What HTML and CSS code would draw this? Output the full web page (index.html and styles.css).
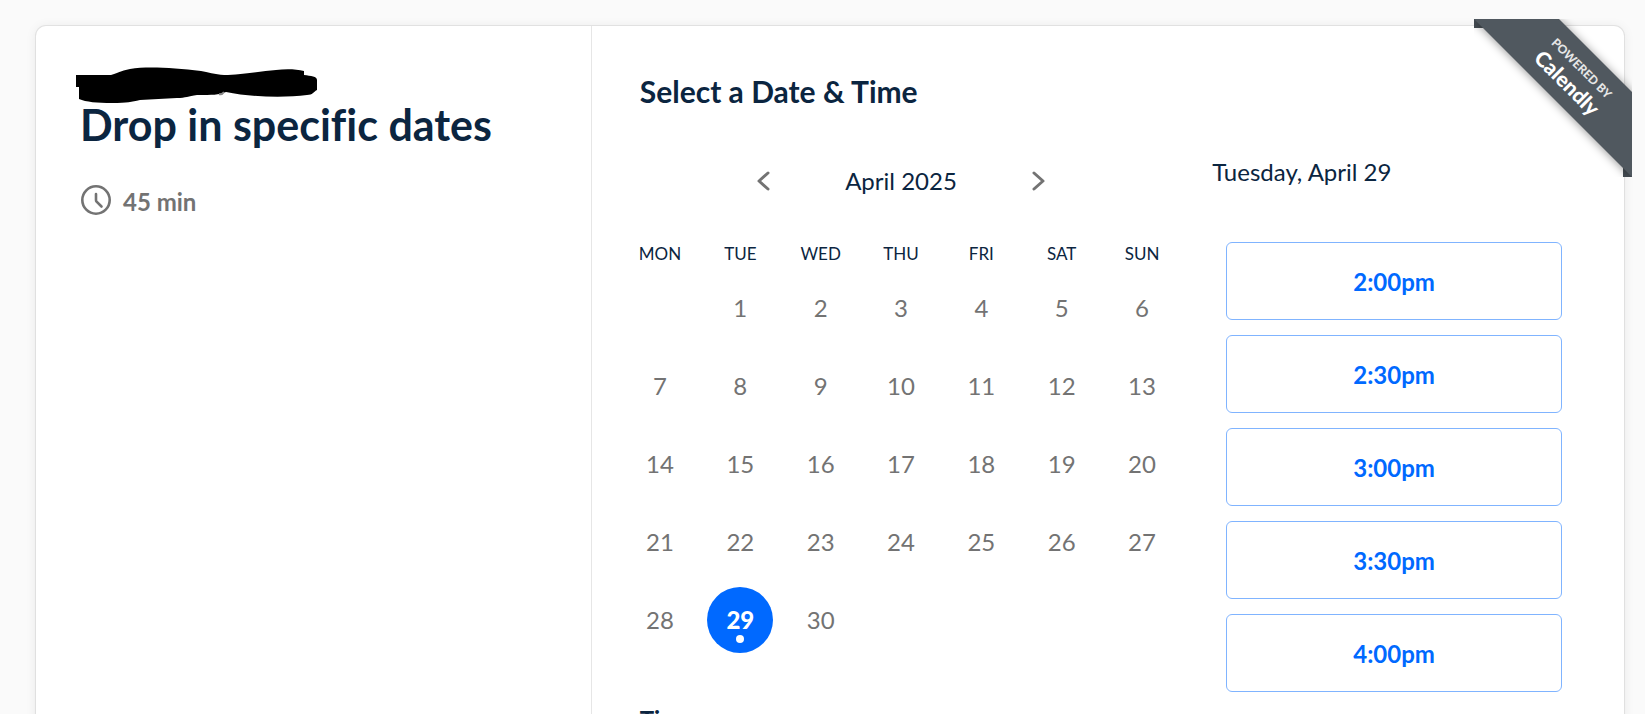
FILE: index.html
```
<!DOCTYPE html>
<html lang="en">
<head>
    <meta charset="UTF-8">
    <meta name="viewport" content="width=device-width, initial-scale=1.0">
    <title>Drop in specific dates - Calendly</title>
    <link rel="stylesheet" href="styles.css">
</head>
<body>
    <main class="booking">
        <section class="event-info">
            <svg class="host-name" width="241" height="36" viewBox="0 0 241 36" aria-hidden="true">
                <path d="M0 8H35C44 5 48 3 54 2C72 -1 98 1 125 4C136 6 141 8 152 8C172 7 187 4 200 3C209 2 220 2 228 4V8C235 9 241 9 241 13V23C237 25 237 28 231 28C208 31 174 30 150 25C142 28 137 28 121 28C112 29 110 31 101 31L64 33C55 35 52 36 36 36C21 36 10 35 3 32V20H0Z"/>
                <path class="host-rest" d="M143 27q3 1 5 -2"/>
            </svg>
            <h1 class="event-title">Drop in specific dates</h1>
            <div class="duration">
                <svg class="clock" width="30" height="30" viewBox="0 0 30 30" aria-hidden="true">
                    <circle cx="15" cy="15" r="13.7"/>
                    <path d="M15 9v6q0 1 .6 1.700L20.500 21.500"/>
                </svg>
                <span class="duration-text">45 min</span>
            </div>
        </section>

        <section class="picker">
            <div class="calendar">
                <h2 class="picker-title">Select a Date &amp; Time</h2>
                <div class="month-nav">
                    <button class="nav-button" type="button" aria-label="Previous month">
                        <svg width="14" height="20" viewBox="0 0 14 20"><path d="M12 2L3 10L12 18"/></svg>
                    </button>
                    <div class="month">April 2025</div>
                    <button class="nav-button" type="button" aria-label="Next month">
                        <svg width="14" height="20" viewBox="0 0 14 20"><path d="M2 2L11 10L2 18"/></svg>
                    </button>
                </div>
                <table class="days">
                    <thead>
                        <tr><th>MON</th><th>TUE</th><th>WED</th><th>THU</th><th>FRI</th><th>SAT</th><th>SUN</th></tr>
                    </thead>
                    <tbody>
                        <tr>
                            <td></td>
                            <td><button class="day" disabled>1</button></td>
                            <td><button class="day" disabled>2</button></td>
                            <td><button class="day" disabled>3</button></td>
                            <td><button class="day" disabled>4</button></td>
                            <td><button class="day" disabled>5</button></td>
                            <td><button class="day" disabled>6</button></td>
                        </tr>
                        <tr>
                            <td><button class="day" disabled>7</button></td>
                            <td><button class="day" disabled>8</button></td>
                            <td><button class="day" disabled>9</button></td>
                            <td><button class="day" disabled>10</button></td>
                            <td><button class="day" disabled>11</button></td>
                            <td><button class="day" disabled>12</button></td>
                            <td><button class="day" disabled>13</button></td>
                        </tr>
                        <tr>
                            <td><button class="day" disabled>14</button></td>
                            <td><button class="day" disabled>15</button></td>
                            <td><button class="day" disabled>16</button></td>
                            <td><button class="day" disabled>17</button></td>
                            <td><button class="day" disabled>18</button></td>
                            <td><button class="day" disabled>19</button></td>
                            <td><button class="day" disabled>20</button></td>
                        </tr>
                        <tr>
                            <td><button class="day" disabled>21</button></td>
                            <td><button class="day" disabled>22</button></td>
                            <td><button class="day" disabled>23</button></td>
                            <td><button class="day" disabled>24</button></td>
                            <td><button class="day" disabled>25</button></td>
                            <td><button class="day" disabled>26</button></td>
                            <td><button class="day" disabled>27</button></td>
                        </tr>
                        <tr>
                            <td><button class="day" disabled>28</button></td>
                            <td><button class="day selected" type="button" aria-pressed="true">29</button></td>
                            <td><button class="day" disabled>30</button></td>
                            <td></td>
                            <td></td>
                            <td></td>
                            <td></td>
                        </tr>
                    </tbody>
                </table>
                <h3 class="timezone-title">Time zone</h3>
            </div>

            <div class="times">
                <div class="times-date">Tuesday, April 29</div>
                <div class="time-list">
                    <button class="time" type="button">2:00pm</button>
                    <button class="time" type="button">2:30pm</button>
                    <button class="time" type="button">3:00pm</button>
                    <button class="time" type="button">3:30pm</button>
                    <button class="time" type="button">4:00pm</button>
                </div>
            </div>
        </section>

        <a class="ribbon" href="#">
            <svg class="ribbon-shape" width="158" height="158" viewBox="0 0 158 158" aria-hidden="true">
                <path class="ribbon-fold" d="M0 0H9V9H0ZM149 149H158V158H149Z"/>
                <path class="ribbon-band" d="M0 0H85L158 73V158Z"/>
            </svg>
            <span class="ribbon-text">
                <span class="ribbon-small">POWERED BY</span>
                <span class="ribbon-brand">Calendly</span>
            </span>
        </a>
    </main>
</body>
</html>
```

FILE: styles.css
```
* {
    margin: 0;
    padding: 0;
    box-sizing: border-box;
}

body {
    height: 100vh;
    padding: 26px 21px 0 36px;
    overflow: hidden;
    font-family: Lato, 'Liberation Sans', sans-serif;
    font-size: 24px;
    line-height: 32px;
    font-variant-ligatures: none;
    background: #fafafa;
    color: #0b2540;
}

button {
    font: inherit;
    background: none;
    border: none;
    cursor: pointer;
}

.booking {
    position: relative;
    display: flex;
    min-height: 100vh;
    background: white;
    border-radius: 10px;
    box-shadow: 0 0 0 1px rgba(26, 26, 26, 0.08), 0 1px 12px rgba(0, 0, 0, 0.08);
}

.event-info {
    flex: 0 0 35%;
    padding: 41px 40px 0;
    border-right: 1px solid #e6e6e6;
}

.host-name {
    display: block;
}

.host-rest {
    fill: none;
    stroke: #888;
    stroke-width: 2;
}

.event-title {
    padding-left: 4px;
    font-size: 43px;
    line-height: 44px;
}

.duration {
    display: flex;
    align-items: center;
    gap: 12px;
    margin-top: 35px;
    padding-left: 5px;
    font-weight: bold;
    color: #737373;
}

.duration-text {
    padding-top: 4px;
}

.clock {
    fill: none;
    stroke: #737373;
    stroke-width: 2.6;
    stroke-linecap: round;
}

.picker {
    flex: 1;
    display: flex;
    min-width: 0;
}

.calendar {
    flex: 0 0 57.2%;
    padding: 47px 0 0 28px;
}

.picker-title {
    padding-left: 20px;
    font-size: 30px;
    line-height: 36px;
}

.month-nav {
    display: flex;
    justify-content: center;
    align-items: center;
    margin-top: 56px;
}

.month {
    width: 230px;
    text-align: center;
}

.nav-button {
    display: flex;
    padding: 6px 16px;
}

.nav-button svg {
    fill: none;
    stroke: #737373;
    stroke-width: 3;
    stroke-linecap: round;
    stroke-linejoin: round;
}

.days {
    width: 100%;
    margin-top: 42px;
    table-layout: fixed;
    border-collapse: collapse;
}

.days th {
    height: 30px;
    font-size: 17px;
    font-weight: normal;
    line-height: 30px;
}

.days td {
    height: 78px;
    text-align: center;
    vertical-align: middle;
}

.day {
    display: block;
    width: 66px;
    height: 66px;
    margin: 0 auto;
    border-radius: 50%;
    color: #737373;
}

.day.selected {
    position: relative;
    background: #0069ff;
    font-weight: 900;
    color: white;
}

.day.selected::after {
    content: '';
    position: absolute;
    bottom: 10px;
    left: 29px;
    width: 8px;
    height: 8px;
    border-radius: 50%;
    background: white;
}

.timezone-title {
    margin-top: 45px;
    padding-left: 20px;
    font-size: 24px;
    line-height: 32px;
}

.times {
    flex: 1;
    padding: 130px 62px 0 30px;
}

.time-list {
    display: flex;
    flex-direction: column;
    gap: 15px;
    margin-top: 54px;
    padding-left: 14px;
}

.time {
    height: 78px;
    padding-top: 2px;
    border: 1px solid #80b4ff;
    border-radius: 6px;
    font-weight: bold;
    color: #0069ff;
}

/* corner ribbon */
.ribbon {
    position: absolute;
    top: -7px;
    right: -8px;
    width: 158px;
    height: 158px;
    overflow: hidden;
    color: white;
    text-decoration: none;
}

.ribbon-shape {
    display: block;
}

.ribbon-fold {
    fill: #454d54;
}

.ribbon-band {
    fill: #50585f;
    filter: drop-shadow(0 1px 5px rgba(0, 0, 0, 0.4));
}

.ribbon-text {
    position: absolute;
    top: 38px;
    left: 39px;
    width: 120px;
    text-align: center;
    font-weight: 900;
    transform: rotate(45deg);
}

.ribbon-small,
.ribbon-brand {
    display: block;
}

.ribbon-small {
    font-size: 12px;
    line-height: 16px;
    color: #e6e6e6;
}

.ribbon-brand {
    font-size: 21px;
    line-height: 24px;
}
```
